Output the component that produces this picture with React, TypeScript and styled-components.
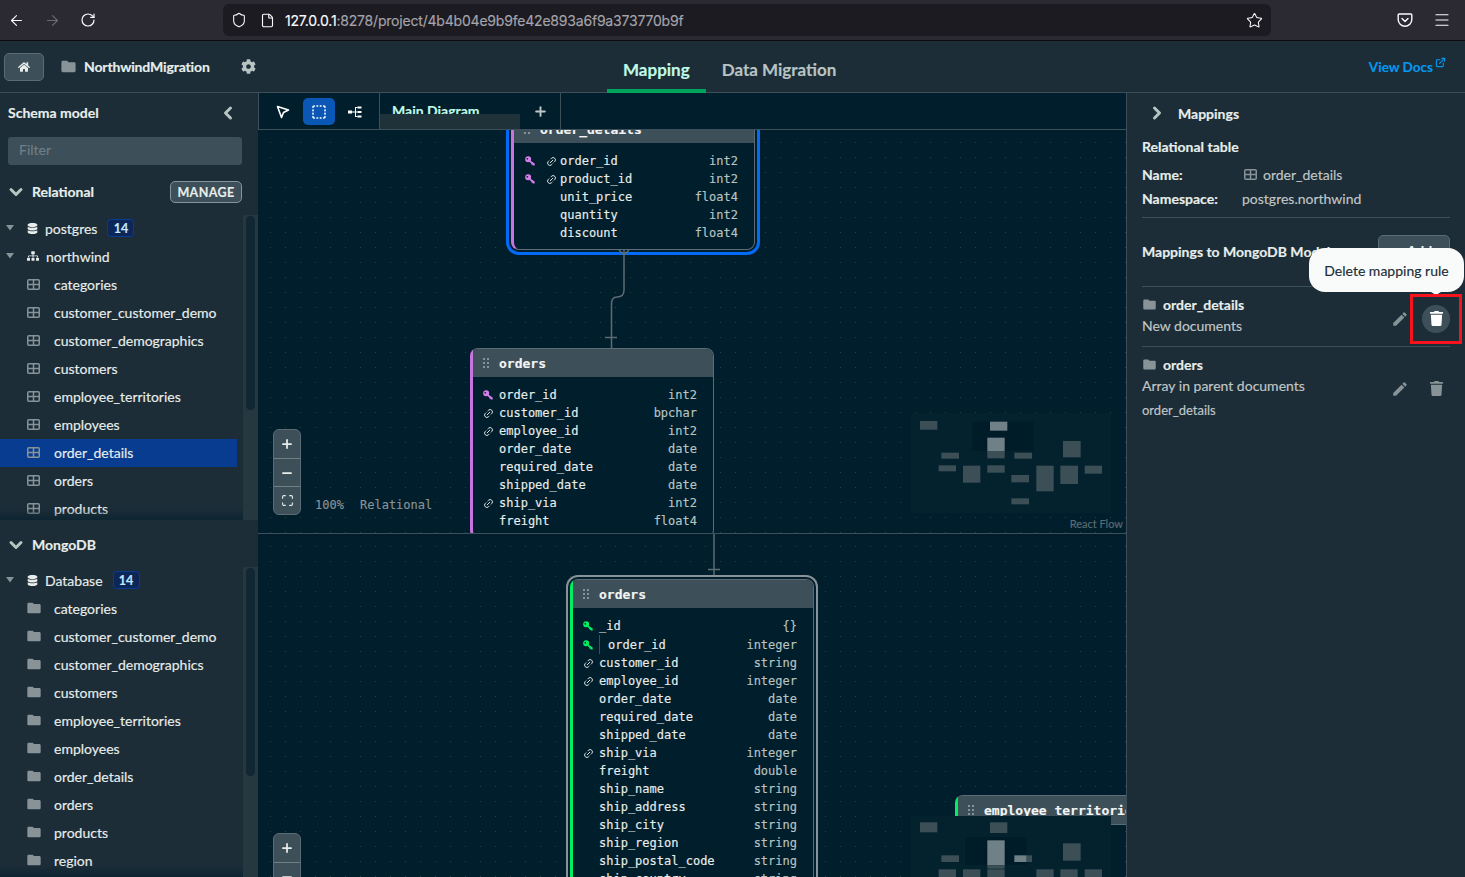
import styled, { createGlobalStyle } from 'styled-components';
import {
    ArrowLeft, ArrowRight, ChevronDown, ChevronLeft, ChevronRight, File, Menu, Minus, Plus, RotateCw,
    Shield, SquareDashed, Star, Maximize, ExternalLink, Link2,
} from 'lucide-react';
import { FaCog, FaDatabase, FaHome, FaSitemap, FaTrash } from 'react-icons/fa';
import { MdEdit, MdFolder } from 'react-icons/md';

const UI_FONT = `'Lato', 'Liberation Sans', sans-serif`;
const MONO_FONT = `'DejaVu Sans Mono', 'Liberation Mono', monospace`;

const GlobalStyle = createGlobalStyle`
    html, body {
        margin: 0;
        padding: 0;
        height: 100%;
        overflow: hidden;
        background: #001e2b;
    }
    * { box-sizing: border-box; }
`;

type Field = { name: string; type: string; key?: boolean; link?: boolean; nested?: boolean };

const relationalTables = [
    'categories', 'customer_customer_demo', 'customer_demographics', 'customers', 'employee_territories',
    'employees', 'order_details', 'orders', 'products',
];

const mongoCollections = [...relationalTables, 'region'];

const orderDetailsFields: Field[] = [
    { name: 'order_id', type: 'int2', key: true, link: true },
    { name: 'product_id', type: 'int2', key: true, link: true },
    { name: 'unit_price', type: 'float4' },
    { name: 'quantity', type: 'int2' },
    { name: 'discount', type: 'float4' },
];

const ordersFields: Field[] = [
    { name: 'order_id', type: 'int2', key: true },
    { name: 'customer_id', type: 'bpchar', link: true },
    { name: 'employee_id', type: 'int2', link: true },
    { name: 'order_date', type: 'date' },
    { name: 'required_date', type: 'date' },
    { name: 'shipped_date', type: 'date' },
    { name: 'ship_via', type: 'int2', link: true },
    { name: 'freight', type: 'float4' },
];

const mongoOrdersFields: Field[] = [
    { name: '_id', type: '{}', key: true },
    { name: 'order_id', type: 'integer', key: true, nested: true },
    { name: 'customer_id', type: 'string', link: true },
    { name: 'employee_id', type: 'integer', link: true },
    { name: 'order_date', type: 'date' },
    { name: 'required_date', type: 'date' },
    { name: 'shipped_date', type: 'date' },
    { name: 'ship_via', type: 'integer', link: true },
    { name: 'freight', type: 'double' },
    { name: 'ship_name', type: 'string' },
    { name: 'ship_address', type: 'string' },
    { name: 'ship_city', type: 'string' },
    { name: 'ship_region', type: 'string' },
    { name: 'ship_postal_code', type: 'string' },
    { name: 'ship_country', type: 'string' },
];

type MiniRect = [number, number, number, number, boolean?];

const topMiniRects: MiniRect[] = [
    [120, 64, 52, 26], [330, 66, 52, 27, true], [322, 114, 52, 40, true], [322, 154, 52, 22], [184, 159, 53, 18],
    [403, 159, 53, 18], [176, 197, 52, 18], [249, 198, 52, 51], [322, 197, 52, 22], [394, 226, 53, 22],
    [469, 198, 52, 77], [541, 198, 53, 55], [614, 198, 52, 24], [549, 124, 53, 49], [394, 296, 53, 18],
];

const bottomMiniRects: MiniRect[] = [
    [120, 126, 52, 30], [330, 126, 52, 32], [322, 180, 52, 75, true], [322, 255, 52, 10], [322, 267, 52, 24],
    [184, 225, 53, 20], [403, 225, 37, 20, true], [440, 225, 16, 20], [176, 267, 52, 24], [249, 267, 52, 24],
    [469, 267, 52, 24], [541, 267, 52, 24], [614, 267, 52, 24], [549, 189, 53, 52],
];

function TableIcon() {
    return (
        <svg width="13" height="11" viewBox="0 0 13 11" fill="none" stroke="#889397" strokeWidth="1.5">
            <rect x="0.75" y="0.75" width="11.5" height="9.5" rx="1" />
            <path d="M6.5 1v9M1 5.5h11" />
        </svg>
    );
}

function KeyIcon({ color }: { color: string }) {
    return (
        <svg width="10" height="10" viewBox="0 0 10 10" fill={color}>
            <path d="M3.2 0.3a3 3 0 1 1 -0.1 6a3 3 0 0 1 0.1 -6zM2.3 1.9a.8.8 0 1 0 0 1.7a.8.8 0 0 0 0 -1.7z" fillRule="evenodd" />
            <path d="M4.9 4.2L9.7 7.6V9.6H7.8L7.2 8.6L6.3 8.4L6.1 7.3L3.9 5.4z" />
        </svg>
    );
}

function GripIcon() {
    return (
        <svg width="6" height="10" viewBox="0 0 6 10" fill="#889397">
            {[0, 4, 8].map((y) => (
                <g key={y}>
                    <rect x="0" y={y} width="2" height="2" />
                    <rect x="4" y={y} width="2" height="2" />
                </g>
            ))}
        </svg>
    );
}

function Caret() {
    return (
        <svg width="10" height="6" viewBox="0 0 10 6" fill="#889397">
            <path d="M1 0h8L5 5.5z" />
        </svg>
    );
}

function PocketIcon() {
    return (
        <svg width="16" height="16" viewBox="0 0 16 16" fill="none" stroke="#fbfbfe" strokeWidth="1.4" strokeLinecap="round" strokeLinejoin="round">
            <path d="M2.2 2h11.6c.6 0 1 .4 1 1v4.4a6.8 6.8 0 0 1 -13.6 0V3c0-.6.4-1 1-1z" />
            <path d="M5 6.4l3 3l3-3" />
        </svg>
    );
}

function PointerIcon() {
    return (
        <svg width="14" height="14" viewBox="0 0 14 14" fill="none" stroke="#fff" strokeWidth="1.6" strokeLinejoin="round">
            <path d="M1.5 1.5L12.5 5L7.5 7.5L5.5 12.5z" />
        </svg>
    );
}

function TreeToolIcon() {
    return (
        <svg width="14" height="14" viewBox="0 0 14 14" fill="#fff" stroke="#fff" strokeWidth="1">
            <rect x="0" y="5.5" width="4" height="3" stroke="none" />
            <path d="M4 7h3.5M7.5 2v10M7.5 2.5h2M7.5 7h2M7.5 11.5h2" fill="none" />
            <rect x="9.5" y="1.5" width="4" height="2" stroke="none" />
            <rect x="9.5" y="6" width="4" height="2" stroke="none" />
            <rect x="9.5" y="10.5" width="4" height="2" stroke="none" />
        </svg>
    );
}

function FieldRows({ fields, color, wideGutter }: { fields: Field[]; color: string; wideGutter?: boolean }) {
    return (
        <NodeBody>
            {fields.map((field) => (
                <FieldRow key={field.name + field.type} $nested={field.nested}>
                    <Gutter $wide={wideGutter}>
                        {field.key && <KeyIcon color={color} />}
                        {field.link && <LinkGlyph size={11} strokeWidth={2} />}
                    </Gutter>
                    <FieldName $nested={field.nested}>{field.name}</FieldName>
                    <FieldType>{field.type}</FieldType>
                </FieldRow>
            ))}
        </NodeBody>
    );
}

function MiniMap({ rects, viewBox, view, top }: { rects: MiniRect[]; viewBox: string; view: number[]; top: number }) {
    return (
        <MiniMapBox $top={top} viewBox={viewBox} width="200" height="100" preserveAspectRatio="xMinYMin slice">
            <rect x={view[0]} y={view[1]} width={view[2]} height={view[3]} fill="#001c28" />
            {rects.map(([x, y, w, h, light]) => (
                <rect key={`${x}-${y}`} x={x} y={y} width={w} height={h} fill={light ? '#6f8086' : '#3c4f57'} />
            ))}
        </MiniMapBox>
    );
}

function ZoomControls() {
    return (
        <ZoomBox>
            <ZoomButton><Plus size={14} strokeWidth={3} /></ZoomButton>
            <ZoomButton><Minus size={14} strokeWidth={3} /></ZoomButton>
            <ZoomButton><Maximize size={13} strokeWidth={2} /></ZoomButton>
        </ZoomBox>
    );
}

function App() {
    return (
        <>
            <GlobalStyle />
            <Page>
                <BrowserBar>
                    <NavButtons>
                        <ArrowLeft size={17} color="#fbfbfe" strokeWidth={1.6} />
                        <ArrowRight size={17} color="#6c6b72" strokeWidth={1.6} />
                        <RotateCw size={16} color="#fbfbfe" strokeWidth={1.8} />
                    </NavButtons>
                    <UrlBar>
                        <Shield size={16} color="#fbfbfe" strokeWidth={1.6} />
                        <File size={15} color="#fbfbfe" strokeWidth={1.8} />
                        <UrlText><b>127.0.0.1</b>:8278/project/4b4b04e9b9fe42e893a6f9a373770b9f</UrlText>
                        <UrlStar><Star size={17} color="#fbfbfe" strokeWidth={1.5} /></UrlStar>
                    </UrlBar>
                    <BrowserActions>
                        <PocketIcon />
                        <Menu size={18} color="#fbfbfe" strokeWidth={1.6} />
                    </BrowserActions>
                </BrowserBar>

                <AppHeader>
                    <HeaderLeft>
                        <HomeButton><FaHome size={12} /></HomeButton>
                        <ProjectName><MdFolder size={17} color="#889397" />NorthwindMigration</ProjectName>
                        <FaCog size={15} color="#b8c4c2" />
                    </HeaderLeft>
                    <HeaderTab $active>Mapping</HeaderTab>
                    <HeaderTab>Data Migration</HeaderTab>
                    <DocsLink>View Docs<ExternalLink size={11} strokeWidth={2.4} /></DocsLink>
                </AppHeader>

                <Main>
                    <Sidebar>
                        <SidebarTitle>
                            Schema model
                            <ChevronLeft size={20} strokeWidth={3.6} color="#b8c4c2" />
                        </SidebarTitle>
                        <FilterInput placeholder="Filter" />
                        <SectionHeader $height={40} $offset={7}>
                            <ChevronDown size={20} strokeWidth={3.6} color="#b8c4c2" />
                            <SectionName>Relational</SectionName>
                            <ManageButton>MANAGE</ManageButton>
                        </SectionHeader>
                        <Tree $height={305} $offset={3}>
                            <TreeList>
                                <BranchRow><Caret /><FaDatabase size={11} color="#e8edeb" /><span>postgres</span><CountBadge>14</CountBadge></BranchRow>
                                <BranchRow><Caret /><FaSitemap size={12} color="#e8edeb" /><span>northwind</span></BranchRow>
                                {relationalTables.map((name) => (
                                    <LeafRow key={name} $selected={name === 'order_details'}><TableIcon /><span>{name}</span></LeafRow>
                                ))}
                            </TreeList>
                            <ScrollTrack><ScrollThumb $height={194} /></ScrollTrack>
                        </Tree>
                        <SectionHeader $height={47} $inset={3}>
                            <ChevronDown size={20} strokeWidth={3.6} color="#b8c4c2" />
                            <SectionName>MongoDB</SectionName>
                        </SectionHeader>
                        <Tree $height={310}>
                            <TreeList>
                                <BranchRow><Caret /><FaDatabase size={11} color="#e8edeb" /><span>Database</span><CountBadge>14</CountBadge></BranchRow>
                                {mongoCollections.map((name) => (
                                    <LeafRow key={name}><FolderGlyph /><span>{name}</span></LeafRow>
                                ))}
                            </TreeList>
                            <ScrollTrack><ScrollThumb $height={208} /></ScrollTrack>
                        </Tree>
                    </Sidebar>

                    <Center>
                        <TopPane>
                            <DiagramToolbar>
                                <ToolGroup>
                                    <ToolButton><PointerIcon /></ToolButton>
                                    <ToolButton $active><SquareDashed size={16} strokeWidth={2.4} /></ToolButton>
                                    <ToolButton><TreeToolIcon /></ToolButton>
                                </ToolGroup>
                                <DiagramTab><DiagramTabLabel>Main Diagram</DiagramTabLabel></DiagramTab>
                                <AddTab><Plus size={15} strokeWidth={3} /></AddTab>
                                <ToolbarRest />
                            </DiagramToolbar>
                            <Flow>
                                <TableNode $left={253} $top={-16} $accent="#c874e0" $ring="#016bf8">
                                    <NodeHeader><GripIcon />order_details</NodeHeader>
                                    <FieldRows fields={orderDetailsFields} color="#d27fe8" wideGutter />
                                </TableNode>
                                <TableNode $left={212} $top={218} $accent="#c874e0">
                                    <NodeHeader><GripIcon />orders</NodeHeader>
                                    <FieldRows fields={ordersFields} color="#d27fe8" />
                                </TableNode>
                                <Edges width="868" height="403">
                                    <path d="M366 120V160Q366 167 359 167Q353.5 167 353.5 174V218M347 207.5H359M361 120L366 125L371 120" />
                                </Edges>
                                <ZoomControls />
                                <ZoomLabel>100%</ZoomLabel>
                                <ModelLabel>Relational</ModelLabel>
                                <MiniMap rects={topMiniRects} viewBox="93 40 600 300" view={[277, 66, 183, 87]} top={283} />
                                <Attribution>React Flow</Attribution>
                            </Flow>
                        </TopPane>
                        <BottomPane>
                            <Edges width="868" height="343">
                                <path d="M456 0V42M450 35.5H462" />
                            </Edges>
                            <TableNode $left={312} $top={45} $accent="#00ed64" $ring="#889397">
                                <NodeHeader><GripIcon />orders</NodeHeader>
                                <FieldRows fields={mongoOrdersFields} color="#00ed64" />
                            </TableNode>
                            <TableNode $left={697} $top={261} $accent="#00ed64">
                                <NodeHeader><GripIcon />employee_territories</NodeHeader>
                            </TableNode>
                            <ZoomControls />
                            <MiniMap rects={bottomMiniRects} viewBox="93 107 600 300" view={[255, 170, 185, 84]} top={282} />
                        </BottomPane>
                    </Center>

                    <MappingsPanel>
                        <PanelTitle>
                            <ChevronRight size={20} strokeWidth={3.6} color="#b8c4c2" />
                            Mappings
                        </PanelTitle>
                        <TableHeading>Relational table</TableHeading>
                        <InfoRow><InfoLabel>Name:</InfoLabel><InfoValue $indent><TableIcon />order_details</InfoValue></InfoRow>
                        <InfoRow><InfoLabel>Namespace:</InfoLabel><InfoValue>postgres.northwind</InfoValue></InfoRow>
                        <MappingsHeader>
                            <span>Mappings to MongoDB Model</span>
                            <AddButton>+ Add</AddButton>
                        </MappingsHeader>
                        <MappingItem>
                            <MappingText>
                                <MappingName><MdFolder size={15} color="#889397" />order_details</MappingName>
                                <MappingKind>New documents</MappingKind>
                            </MappingText>
                            <RuleActions $shift={7}>
                                <MdEdit size={18} color="#889397" />
                                <TrashButton $hover><FaTrash size={15} /></TrashButton>
                            </RuleActions>
                        </MappingItem>
                        <MappingItem>
                            <MappingText>
                                <MappingName><MdFolder size={15} color="#889397" />orders</MappingName>
                                <MappingKind>Array in parent documents</MappingKind>
                                <MappingPath>order_details</MappingPath>
                            </MappingText>
                            <RuleActions $shift={3}>
                                <MdEdit size={18} color="#889397" />
                                <TrashButton><FaTrash size={15} /></TrashButton>
                            </RuleActions>
                        </MappingItem>
                        <Tooltip>Delete mapping rule</Tooltip>
                        <Highlight />
                    </MappingsPanel>
                </Main>
            </Page>
        </>
    );
}

const Page = styled.div`
    width: 1465px;
    height: 877px;
    display: flex;
    flex-direction: column;
    overflow: hidden;
    font-family: ${UI_FONT};
    color: #e8edeb;
    background: #1c2d38;
    -webkit-text-stroke: 0.15px;
`;

const BrowserBar = styled.div`
    height: 41px;
    flex: none;
    display: flex;
    align-items: center;
    background: #2b2a33;
    border-bottom: 1px solid #0c0c0d;
`;

const NavButtons = styled.div`
    width: 223px;
    display: flex;
    align-items: center;
    gap: 19px;
    padding-left: 8px;
`;

const UrlBar = styled.div`
    width: 1048px;
    height: 32px;
    display: flex;
    align-items: center;
    gap: 13px;
    padding: 0 8px;
    border-radius: 6px;
    background: #1c1b22;
`;

const UrlText = styled.div`
    margin-left: -3px;
    font-family: 'Inter', sans-serif;
    font-size: 14px;
    color: #a5a4ab;
    letter-spacing: -0.2px;
    b {
        font-weight: 400;
        color: #fbfbfe;
    }
`;

const UrlStar = styled.div`
    margin-left: auto;
    display: flex;
`;

const BrowserActions = styled.div`
    flex: 1;
    display: flex;
    align-items: center;
    justify-content: flex-end;
    gap: 20px;
    padding-right: 14px;
`;

const AppHeader = styled.div`
    height: 52px;
    flex: none;
    display: flex;
    align-items: stretch;
    border-bottom: 1px solid #3d4f58;
    background: #1c2d38;
`;

const HeaderLeft = styled.div`
    width: 607px;
    display: flex;
    align-items: center;
    padding-left: 4px;
`;

const HomeButton = styled.div`
    width: 40px;
    height: 28px;
    display: flex;
    align-items: center;
    justify-content: center;
    margin-right: 16px;
    border: 1px solid #5c6c75;
    border-radius: 5px;
    background: #3d4f58;
    color: #e8edeb;
`;

const ProjectName = styled.div`
    width: 181px;
    display: flex;
    align-items: center;
    gap: 7px;
    font-size: 14px;
    font-weight: 700;
    letter-spacing: -0.15px;
`;

const HeaderTab = styled.div<{ $active?: boolean }>`
    padding: 9px 16px 0;
    display: flex;
    align-items: center;
    font-size: 17px;
    font-weight: 700;
    color: ${(p) => (p.$active ? '#c0fae6' : '#b8c4c2')};
    border-bottom: 4px solid ${(p) => (p.$active ? '#00a35c' : 'transparent')};
    margin-bottom: -1px;
`;

const DocsLink = styled.div`
    margin-left: auto;
    padding: 0 19px 0 0;
    display: flex;
    align-items: center;
    font-size: 13.5px;
    font-weight: 700;
    color: #0498ec;
    svg {
        margin: -8px 0 0 2px;
    }
`;

const Main = styled.div`
    flex: 1;
    min-height: 0;
    display: flex;
`;

const Sidebar = styled.div`
    width: 258px;
    flex: none;
    display: flex;
    flex-direction: column;
    background: #1c2d38;
    overflow: hidden;
`;

const SidebarTitle = styled.div`
    height: 44px;
    flex: none;
    display: flex;
    align-items: center;
    justify-content: space-between;
    padding: 0 20px 5px 8px;
    font-size: 14px;
    font-weight: 700;
`;

const FilterInput = styled.input`
    flex: none;
    width: 234px;
    height: 28px;
    margin-left: 8px;
    padding: 0 11px 3px;
    border: none;
    outline: none;
    border-radius: 3px;
    background: #3d4f58;
    font-family: ${UI_FONT};
    font-size: 14px;
    &::placeholder {
        color: #6f7f88;
    }
`;

const SectionHeader = styled.div<{ $height: number; $offset?: number; $inset?: number }>`
    height: ${(p) => p.$height}px;
    flex: none;
    display: flex;
    align-items: center;
    gap: 6px;
    margin-top: ${(p) => p.$offset ?? 0}px;
    padding: ${(p) => p.$inset ?? 0}px 16px 0 6px;
`;

const SectionName = styled.div`
    flex: 1;
    padding-bottom: 2px;
    font-size: 14px;
    font-weight: 700;
`;

const ManageButton = styled.div`
    width: 72px;
    height: 22px;
    display: flex;
    align-items: center;
    justify-content: center;
    border: 1px solid #889397;
    border-radius: 5px;
    background: #3d4f58;
    font-size: 12.5px;
    font-weight: 700;
    letter-spacing: 0.4px;
`;

const Tree = styled.div<{ $height: number; $offset?: number }>`
    position: relative;
    height: ${(p) => p.$height}px;
    flex: none;
    display: flex;
    margin-top: ${(p) => p.$offset ?? 0}px;
    &::after {
        content: '';
        position: absolute;
        left: 0;
        right: 15px;
        bottom: 0;
        height: 12px;
        background: linear-gradient(rgba(0, 30, 43, 0), rgba(0, 30, 43, 0.55));
    }
`;

const TreeList = styled.div`
    flex: 1;
    display: flex;
    flex-direction: column;
    overflow: hidden;
    padding-right: 6px;
    font-size: 14px;
`;

const BranchRow = styled.div`
    height: 28px;
    flex: none;
    display: flex;
    align-items: center;
    padding: 0 0 2px 5px;
    svg:first-child {
        margin-right: 12px;
    }
    span {
        margin-left: 7px;
    }
`;

const LeafRow = styled.div<{ $selected?: boolean }>`
    height: 28px;
    flex: none;
    display: flex;
    align-items: center;
    gap: 14px;
    padding: 0 0 2px 27px;
    background: ${(p) => (p.$selected ? '#083c90' : 'transparent')};
`;

const FolderGlyph = styled(MdFolder)`
    width: 16px;
    height: 16px;
    margin: 0 -2px 0 -1px;
    color: #889397;
`;

const CountBadge = styled.div`
    width: 27px;
    height: 18px;
    margin-left: 10px;
    display: flex;
    align-items: center;
    justify-content: center;
    border: 1px solid #083c90;
    border-radius: 4px;
    background: #0c2657;
    color: #c3e7fe;
    font-size: 12.5px;
    font-weight: 700;
`;

const ScrollTrack = styled.div`
    width: 15px;
    flex: none;
    padding: 1px 3px 0 3px;
    background: #26383f;
`;

const ScrollThumb = styled.div<{ $height: number }>`
    height: ${(p) => p.$height}px;
    border-radius: 5px;
    background: #112733;
`;

const Center = styled.div`
    flex: 1;
    min-width: 0;
    display: flex;
    flex-direction: column;
`;

const TopPane = styled.div`
    height: 441px;
    flex: none;
    display: flex;
    flex-direction: column;
    border-bottom: 1px solid #3d4f58;
`;

const DiagramToolbar = styled.div`
    height: 37px;
    flex: none;
    display: flex;
    border-left: 1px solid #3d4f58;
    border-bottom: 1px solid #3d4f58;
    background: #001e2b;
`;

const ToolGroup = styled.div`
    width: 121px;
    display: flex;
    align-items: center;
    gap: 4px;
    padding: 0 8px;
    border-right: 1px solid #3d4f58;
`;

const ToolButton = styled.div<{ $active?: boolean }>`
    width: 32px;
    height: 27px;
    display: flex;
    align-items: center;
    justify-content: center;
    margin-top: 1px;
    border-radius: 5px;
    color: #fff;
    background: ${(p) => (p.$active ? '#0b57b5' : 'transparent')};
`;

const DiagramTab = styled.div`
    width: 140px;
    overflow: hidden;
    background: linear-gradient(#001e2b 21px, #1f3239 21px);
`;

const DiagramTabLabel = styled.div`
    height: 21px;
    padding: 10px 0 0 12px;
    overflow: hidden;
    font-size: 14px;
    font-weight: 700;
    line-height: 16px;
    color: #c0fae6;
`;

const AddTab = styled.div`
    width: 41px;
    display: flex;
    align-items: center;
    justify-content: center;
    border-right: 1px solid #3d4f58;
    color: #c1c7c6;
`;

const ToolbarRest = styled.div`
    flex: 1;
`;

const dots = `
    background-color: #001e2b;
    background-image: radial-gradient(circle at center, #2c3f48 0.6px, transparent 1px);
    background-size: 15px 15px;
    background-position: 5px 5px;
`;

const Flow = styled.div`
    position: relative;
    flex: 1;
    overflow: hidden;
    ${dots}
`;

const BottomPane = styled.div`
    position: relative;
    flex: 1;
    min-height: 0;
    overflow: hidden;
    ${dots}
`;

const Edges = styled.svg`
    position: absolute;
    left: 0;
    top: 0;
    fill: none;
    stroke: #5c6c75;
    stroke-width: 1.5;
    pointer-events: none;
`;

const TableNode = styled.div<{ $left: number; $top: number; $accent: string; $ring?: string }>`
    position: absolute;
    left: ${(p) => p.$left}px;
    top: ${(p) => p.$top}px;
    width: 244px;
    border: 1px solid #5c6c75;
    border-left: 3px solid ${(p) => p.$accent};
    border-radius: 8px;
    background: #001e2b;
    box-shadow: ${(p) => (p.$ring ? `0 0 0 2px #001e2b, 0 0 0 ${p.$ring === '#016bf8' ? 5 : 4}px ${p.$ring}` : 'none')};
    font-family: ${MONO_FONT};
`;

const NodeHeader = styled.div`
    height: 28px;
    display: flex;
    align-items: center;
    gap: 10px;
    padding-left: 10px;
    border-top-right-radius: 7px;
    background: #3d4f58;
    font-size: 13px;
    font-weight: 700;
    white-space: nowrap;
    overflow: hidden;
    color: #f2f5f4;
`;

const NodeBody = styled.div`
    padding: 9px 16px 7px 0;
`;

const FieldRow = styled.div<{ $nested?: boolean }>`
    height: ${(p) => (p.$nested ? 19 : 18)}px;
    display: flex;
    align-items: center;
    font-size: 12px;
`;

const Gutter = styled.div<{ $wide?: boolean }>`
    width: ${(p) => (p.$wide ? 46 : 26)}px;
    flex: none;
    display: flex;
    align-items: center;
    gap: ${(p) => (p.$wide ? 11 : 0)}px;
    padding-left: ${(p) => (p.$wide ? 11 : 10)}px;
`;

const LinkGlyph = styled(Link2)`
    color: #e8edeb;
    transform: rotate(-45deg);
`;

const FieldName = styled.div<{ $nested?: boolean }>`
    flex: 1;
    height: 100%;
    display: flex;
    align-items: center;
    color: #e8edeb;
    padding-left: ${(p) => (p.$nested ? 9 : 0)}px;
    box-shadow: ${(p) => (p.$nested ? 'inset 1px 0 0 #3d4f58' : 'none')};
`;

const FieldType = styled.div`
    color: #b8c4c2;
`;

const ZoomBox = styled.div`
    position: absolute;
    left: 15px;
    top: 299px;
    width: 28px;
    border: 1px solid #5c6c75;
    border-radius: 6px;
    overflow: hidden;
    background: #3d4f58;
`;

const ZoomButton = styled.div`
    height: 28px;
    display: flex;
    align-items: center;
    justify-content: center;
    color: #e8edeb;
    & + & {
        border-top: 1px solid #6f8086;
    }
`;

const ZoomLabel = styled.div`
    position: absolute;
    left: 57px;
    top: 368px;
    font-family: ${MONO_FONT};
    font-size: 12px;
    color: #889397;
`;

const ModelLabel = styled(ZoomLabel)`
    left: 102px;
`;

const MiniMapBox = styled.svg<{ $top: number }>`
    position: absolute;
    left: 653px;
    top: ${(p) => p.$top}px;
    background: #03222d;
`;

const Attribution = styled.div`
    position: absolute;
    right: 3px;
    bottom: 3px;
    font-size: 11px;
    color: #5c6c75;
`;

const MappingsPanel = styled.div`
    position: relative;
    width: 339px;
    flex: none;
    display: flex;
    flex-direction: column;
    padding: 0 15px 0 15px;
    border-left: 1px solid #3d4f58;
    background: #1c2d38;
    font-size: 14px;
`;

const PanelTitle = styled.div`
    height: 40px;
    display: flex;
    align-items: center;
    gap: 11px;
    padding-left: 5px;
    font-weight: 700;
`;

const TableHeading = styled.div`
    height: 24px;
    margin: 2px 0 3px;
    line-height: 24px;
    font-weight: 700;
`;

const InfoRow = styled.div`
    height: 24px;
    display: flex;
    align-items: center;
`;

const InfoLabel = styled.div`
    width: 100px;
    font-weight: 700;
`;

const InfoValue = styled.div<{ $indent?: boolean }>`
    display: flex;
    align-items: center;
    gap: 6px;
    padding-left: ${(p) => (p.$indent ? 2 : 0)}px;
    color: #c1c7c6;
`;

const MappingsHeader = styled.div`
    margin-top: 7px;
    height: 70px;
    display: flex;
    justify-content: space-between;
    padding-top: 17px;
    border-top: 1px solid #3d4f58;
    border-bottom: 1px solid #3d4f58;
    font-weight: 700;
    span {
        padding-top: 8px;
    }
`;

const AddButton = styled.div`
    width: 72px;
    height: 30px;
    display: flex;
    align-items: center;
    justify-content: center;
    border: 1px solid #5c6c75;
    border-radius: 5px;
    background: #3d4f58;
`;

const MappingItem = styled.div`
    display: flex;
    align-items: center;
    justify-content: space-between;
    padding: 9px 0 12px;
    & + & {
        border-top: 1px solid #3d4f58;
    }
`;

const MappingText = styled.div`
    display: flex;
    flex-direction: column;
    gap: 4px;
`;

const MappingName = styled.div`
    display: flex;
    align-items: center;
    gap: 6px;
    font-weight: 700;
`;

const MappingKind = styled.div`
    color: #c1c7c6;
`;

const MappingPath = styled.div`
    margin-top: 4px;
    font-size: 13px;
    color: #c1c7c6;
`;

const RuleActions = styled.div<{ $shift: number }>`
    display: flex;
    align-items: center;
    gap: 13px;
    margin-top: ${(p) => p.$shift}px;
    color: #889397;
`;

const TrashButton = styled.div<{ $hover?: boolean }>`
    width: 28px;
    height: 28px;
    display: flex;
    align-items: center;
    justify-content: center;
    border-radius: 50%;
    background: ${(p) => (p.$hover ? '#3d4f58' : 'transparent')};
    color: ${(p) => (p.$hover ? '#fff' : '#889397')};
`;

const Tooltip = styled.div`
    position: absolute;
    left: 182px;
    top: 155px;
    width: 155px;
    height: 44px;
    display: flex;
    align-items: center;
    justify-content: center;
    border-radius: 16px;
    background: #f9fbfa;
    color: #1c2d38;
    font-size: 14px;
    &::after {
        content: '';
        position: absolute;
        left: 122px;
        top: 44px;
        border: 5px solid transparent;
        border-top: 3px solid #f9fbfa;
    }
`;

const Highlight = styled.div`
    position: absolute;
    left: 283px;
    top: 201px;
    width: 52px;
    height: 50px;
    border: 3px solid #f5141e;
`;

export default App;
